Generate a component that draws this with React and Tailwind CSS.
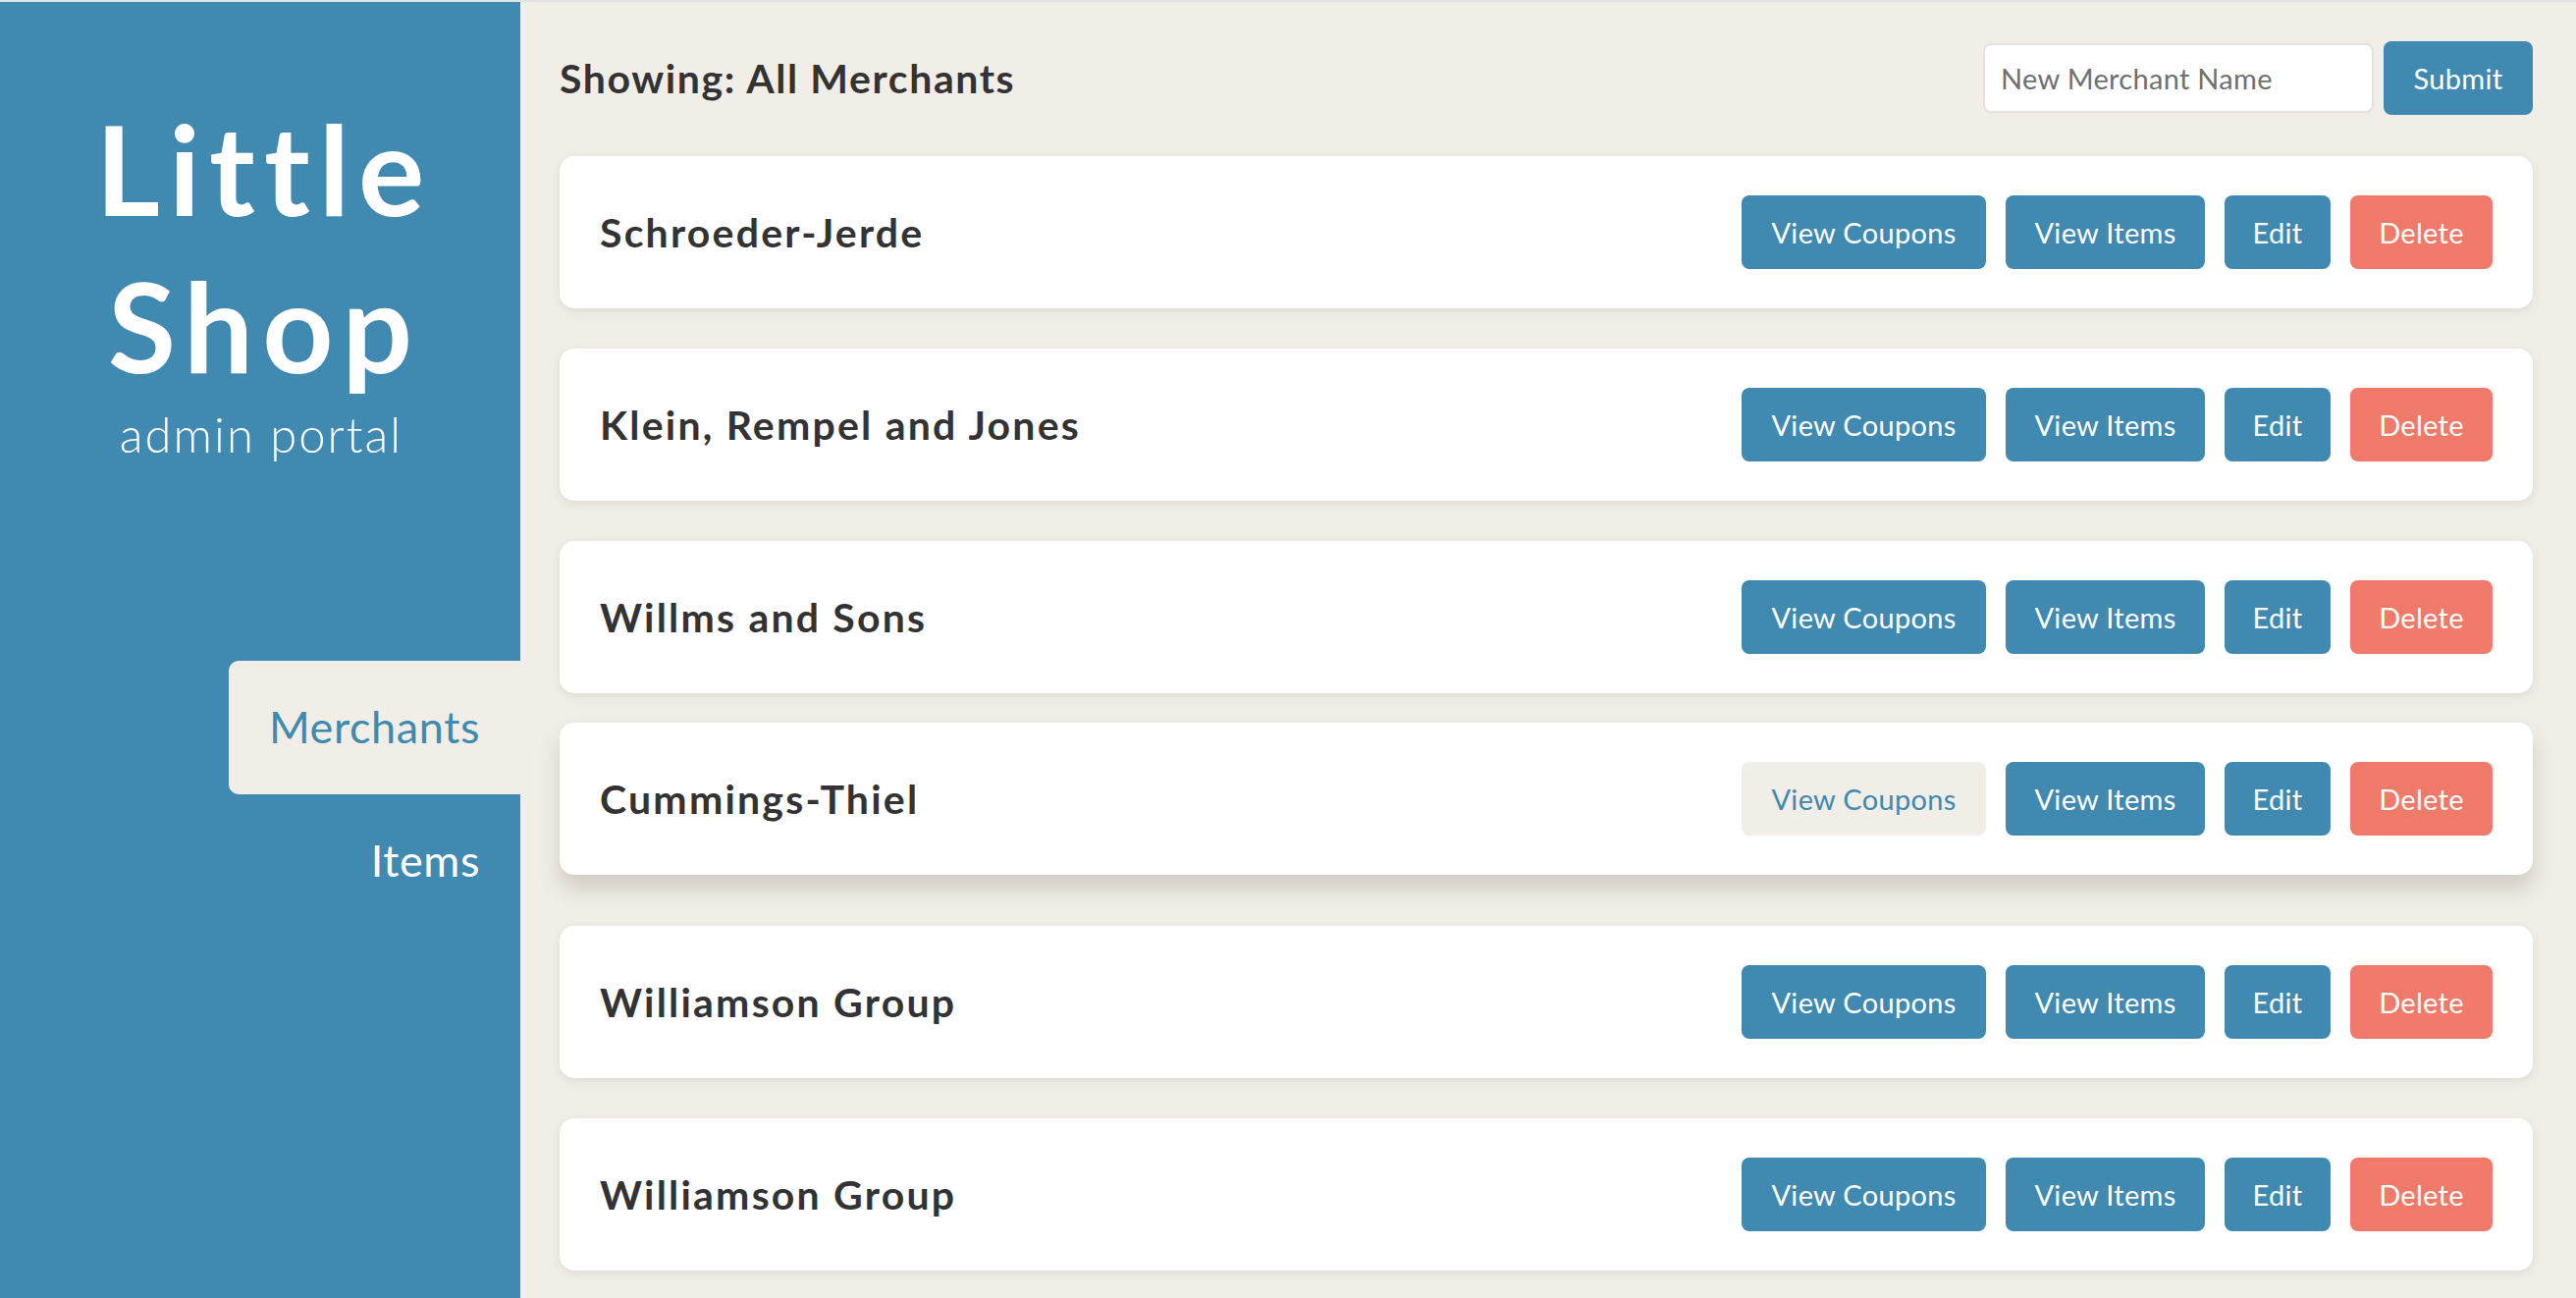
import React from "react";

const merchants = [
  { name: "Schroeder-Jerde" },
  { name: "Klein, Rempel and Jones" },
  { name: "Willms and Sons" },
  { name: "Cummings-Thiel", hover: true },
  { name: "Williamson Group" },
  { name: "Williamson Group" },
];

function Card({ name, hover }) {
  return (
    <div
      className={
        "flex h-[155px] shrink-0 items-center justify-between rounded-[15px] bg-white pl-[41px] pr-[41px] " +
        (hover
          ? "-translate-y-[11px] shadow-[0_14px_22px_rgba(60,50,30,0.18)]"
          : "shadow-[0_3px_10px_rgba(60,50,30,0.10)]")
      }
    >
      <div className="text-[41px] font-bold leading-none tracking-[2.2px] text-[#333333]">{name}</div>
      <div className="flex items-center gap-[20px]">
        <button
          className={
            "h-[75px] w-[249px] rounded-[8px] text-[29px] tracking-[0.3px] " +
            (hover ? "bg-[#f1eee8] text-[#4089b0]" : "bg-[#4089b0] text-white")
          }
        >
          View Coupons
        </button>
        <button className="h-[75px] w-[203px] rounded-[8px] bg-[#4089b0] text-[29px] tracking-[0.3px] text-white">
          View Items
        </button>
        <button className="h-[75px] w-[108px] rounded-[8px] bg-[#4089b0] text-[29px] tracking-[0.3px] text-white">
          Edit
        </button>
        <button className="h-[75px] w-[145px] rounded-[8px] bg-[#ef7a69] text-[29px] tracking-[0.3px] text-white">
          Delete
        </button>
      </div>
    </div>
  );
}

export default function App() {
  return (
    <div
      className="flex h-[1322px] w-[2624px] overflow-hidden border-t-2 border-[#dfe3e3] bg-[#f1eee8]"
      style={{ fontFamily: "Lato, 'Noto Sans', sans-serif" }}
    >
      <aside className="flex w-[530px] shrink-0 flex-col bg-[#4089b0] text-white">
        <div className="pl-[9px] pt-[90px] text-center text-[126px] font-bold leading-[160px] tracking-[9px]">
          Little
          <br />
          Shop
        </div>
        <div className="pl-[2px] text-center text-[49px] font-light leading-[60px] tracking-[2px]">admin portal</div>
        <nav className="mt-[201px] flex flex-col items-end">
          <div className="flex h-[136px] w-[297px] items-center justify-end rounded-l-[10px] bg-[#f1eee8] pr-[41px] text-[45px] tracking-[0.6px] text-[#4089b0]">
            Merchants
          </div>
          <div className="flex h-[136px] w-[297px] items-center justify-end pr-[41px] text-[45px] tracking-[0.6px] text-white">
            Items
          </div>
        </nav>
      </aside>
      <main className="flex flex-1 flex-col pl-[40px] pr-[44px] pt-[40px]">
        <div className="flex h-[75px] shrink-0 items-center justify-between">
          <h1 className="text-[41px] font-bold tracking-[1.6px] text-[#333333]">Showing: All Merchants</h1>
          <div className="flex items-center gap-[10px]">
            <input
              placeholder="New Merchant Name"
              className="h-[71px] w-[398px] rounded-[8px] border-2 border-[#e2e2e2] bg-white px-[16px] text-[29px] tracking-[0.3px] text-[#333] placeholder:text-[#707070] outline-none"
            />
            <button className="h-[75px] w-[152px] rounded-[8px] bg-[#4089b0] text-[29px] tracking-[0.3px] text-white">
              Submit
            </button>
          </div>
        </div>
        <div className="mt-[42px] flex flex-col gap-[41px]">
          {merchants.map((m, i) => (
            <Card key={i} name={m.name} hover={m.hover} />
          ))}
        </div>
      </main>
    </div>
  );
}
